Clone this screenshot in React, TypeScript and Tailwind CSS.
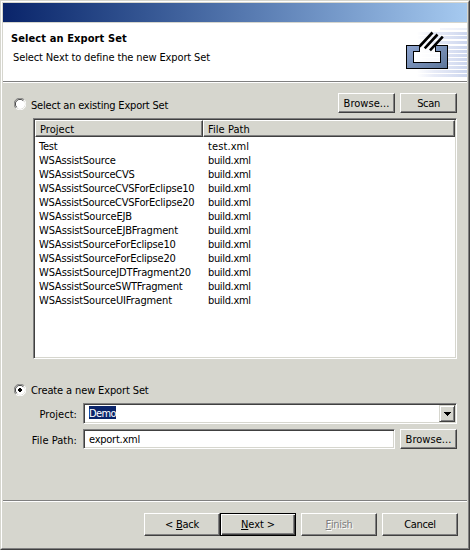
import type { ReactNode } from "react";

const rows: [string, string, string][] = [
  ["Test", "test.xml", "tracking-[-0.2px]"],
  ["WSAssistSource", "build.xml", "tracking-[-0.18px]"],
  ["WSAssistSourceCVS", "build.xml", "tracking-[-0.2px]"],
  ["WSAssistSourceCVSForEclipse10", "build.xml", "tracking-[-0.22px]"],
  ["WSAssistSourceCVSForEclipse20", "build.xml", "tracking-[-0.22px]"],
  ["WSAssistSourceEJB", "build.xml", "tracking-[-0.12px]"],
  ["WSAssistSourceEJBFragment", "build.xml", "tracking-[-0.13px]"],
  ["WSAssistSourceForEclipse10", "build.xml", "tracking-[-0.2px]"],
  ["WSAssistSourceForEclipse20", "build.xml", "tracking-[-0.2px]"],
  ["WSAssistSourceJDTFragment20", "build.xml", "tracking-[-0.13px]"],
  ["WSAssistSourceSWTFragment", "build.xml", "tracking-[-0.2px]"],
  ["WSAssistSourceUIFragment", "build.xml", "tracking-[-0.15px]"],
];

const raised =
  "border border-t-white border-l-white border-r-[#404040] border-b-[#404040] shadow-[inset_-1px_-1px_0_#808080]";
const sunken =
  "border border-t-[#808080] border-l-[#808080] border-r-white border-b-white shadow-[inset_1px_1px_0_#404040,inset_-1px_-1px_0_#d6d6ce]";

function Button({ className, children }: { className: string; children: ReactNode }) {
  return (
    <button className={`flex shrink-0 items-center justify-center bg-[#d6d6ce] whitespace-pre ${className}`}>
      {children}
    </button>
  );
}

function Radio({ checked }: { checked?: boolean }) {
  return (
    <svg width="12" height="12" viewBox="0 0 12 12" className="mt-[2px] shrink-0">
      <circle cx="6" cy="6" r="5" fill="#fff" />
      <path d="M1.8 10.2A5.5 5.5 0 0 1 10.2 1.8" fill="none" stroke="#808080" />
      <path d="M2.7 9.3A4.5 4.5 0 0 1 9.3 2.7" fill="none" stroke="#404040" />
      <path d="M10.2 1.8A5.5 5.5 0 0 1 1.8 10.2" fill="none" stroke="#fff" />
      {checked && <path d="M5 4h2v1h1v2h-1v1h-2v-1h-1v-2h1z" fill="#000" shapeRendering="crispEdges" />}
    </svg>
  );
}

function ExportBanner() {
  return (
    <svg width="56" height="58" viewBox="411 23 56 58" className="shrink-0 overflow-visible">
      <defs>
        <linearGradient id="fade" x1="417" x2="467" y1="0" y2="0" gradientUnits="userSpaceOnUse">
          <stop offset="0" stopColor="#d8def2" stopOpacity="0" />
          <stop offset=".35" stopColor="#d8def2" stopOpacity=".6" />
          <stop offset="1" stopColor="#ccd6ee" />
        </linearGradient>
        <linearGradient id="tray" x1="0" x2="1" y1="0" y2="1">
          <stop offset="0" stopColor="#8fa5d0" />
          <stop offset="1" stopColor="#5d7699" />
        </linearGradient>
      </defs>
      <rect x="440" y="28" width="27" height="2" fill="url(#fade)" fillOpacity=".4" />
      {[32, 36, 41, 46, 50, 54, 58, 62, 66, 70, 74].map((y) => (
        <rect key={y} x="417" y={y} width="50" height="3" fill="url(#fade)" />
      ))}
      <path d="M413.5 51.5h6v-6h16v6h5v11h-27z" fill="#fff" fillOpacity=".75" />
      <path
        d="M406.5 45.5h13v6h-6v11h27v-11h-5v-6h12v23h-41z"
        fill="url(#tray)"
        stroke="#000"
        shapeRendering="crispEdges"
      />
      <path d="M419.5 46.5L432.5 32.5M424.7 48.3L437.5 34.5M430 50.3L442.8 36.7" stroke="#000" strokeWidth="2.6" />
    </svg>
  );
}

export default function App() {
  return (
    <div className="h-[550px] w-[470px] border border-t-[#d6d6ce] border-l-[#d6d6ce] border-r-[#404040] border-b-[#404040] bg-[#d6d6ce] font-['DejaVu_Sans_Condensed','DejaVu_Sans',sans-serif] text-[11px] leading-[14px] tracking-[-0.35px] text-black [font-stretch:condensed]">
      <div className="flex h-full flex-col border border-t-white border-l-white border-r-[#808080] border-b-[#808080] pt-px pr-px pl-px">
        <div className="h-[19px] shrink-0 bg-linear-to-r from-[#0a246a] to-[#a6caf0]" />
        <header className="flex h-[59px] shrink-0 justify-between border-t border-t-[#d6d6ce] bg-white">
          <div className="pt-[9px] pl-[8px]">
            <h1 className="font-bold tracking-[0.1px] whitespace-nowrap">Select an Export Set</h1>
            <p className="mt-[5px] pl-[2px] tracking-[-0.12px] whitespace-nowrap">Select Next to define the new Export Set</p>
          </div>
          <ExportBanner />
        </header>
        <div className="h-[2px] shrink-0 border-t border-b border-t-[#808080] border-b-white" />

        <main className="flex grow flex-col pt-[10px] pr-[10px] pl-[11px]">
          <div className="flex h-[20px] shrink-0 items-center">
            <Radio />
            <span className="mt-[5px] ml-[5px] grow tracking-[-0.2px] whitespace-nowrap">Select an existing Export Set</span>
            <Button className={`h-[20px] w-[57px] pt-[2px] tracking-[0.05px] ${raised}`}>Browse...</Button>
            <Button className={`ml-[5px] h-[20px] w-[57px] pt-[2px] ${raised}`}>Scan</Button>
          </div>

          <div className={`mt-[5px] ml-[19px] h-[241px] w-[424px] shrink-0 bg-white p-px ${sunken}`}>
            <div className="flex h-[17px] bg-[#d6d6ce] tracking-[0.05px]">
              <div className={`w-[168px] pl-[4px] leading-[17px] ${raised}`}>Project</div>
              <div className={`w-[252px] pl-[4px] leading-[17px] ${raised}`}>File Path</div>
            </div>
            <div className="pt-[3px]">
              {rows.map(([project, path, tracking]) => (
                <div key={project} className="flex h-[14px] pl-[4px]">
                  <span className={`w-[169px] whitespace-nowrap ${tracking}`}>{project}</span>
                  <span className={path === "test.xml" ? "tracking-[0.1px]" : ""}>{path}</span>
                </div>
              ))}
            </div>
          </div>

          <div className="mt-[23px] flex h-[14px] shrink-0 items-center">
            <Radio checked />
            <span className="mt-[4px] ml-[5px] tracking-[-0.13px] whitespace-nowrap">Create a new Export Set</span>
          </div>

          <div className="mt-[7px] flex h-[21px] shrink-0">
            <label className="w-[63px] shrink-0 pt-[5px] text-right tracking-[0.05px] whitespace-nowrap">Project:</label>
            <div className={`ml-[6px] flex w-[374px] justify-between bg-white p-px ${sunken}`}>
              <span className="mt-px ml-[4px] h-[13px] w-[27px] bg-[#0a246a] leading-[15px] tracking-[-0.6px] text-white">Demo</span>
              <Button className="h-[17px] w-[16px] border border-t-[#d6d6ce] border-l-[#d6d6ce] border-r-[#404040] border-b-[#404040] shadow-[inset_1px_1px_0_#fff,inset_-1px_-1px_0_#808080]">
                <svg width="7" height="4" viewBox="0 0 7 4" shapeRendering="crispEdges">
                  <path d="M0 0h7v1h-1v1h-1v1h-1v1h-1v-1h-1v-1h-1v-1h-1z" />
                </svg>
              </Button>
            </div>
          </div>
          <div className="mt-[5px] flex h-[20px] shrink-0">
            <label className="w-[63px] shrink-0 pt-[5px] text-right tracking-[0.05px] whitespace-nowrap">File Path:</label>
            <div className={`ml-[6px] w-[312px] bg-white pt-[3px] pl-[5px] tracking-[-0.25px] ${sunken}`}>export.xml</div>
            <Button className={`ml-[5px] h-[20px] w-[57px] pt-[2px] tracking-[0.05px] ${raised}`}>Browse...</Button>
          </div>
        </main>

        <div className="h-[2px] shrink-0 border-t border-b border-t-[#808080] border-b-white" />
        <footer className="flex h-[46px] shrink-0 pt-[11px] pl-[141px]">
          <Button className={`h-[23px] w-[76px] tracking-[-0.25px] ${raised}`}>
            {"< "}<span className="underline">B</span>ack
          </Button>
          <Button className="h-[23px] w-[76px] border border-black tracking-[-0.1px] shadow-[inset_1px_1px_0_#fff,inset_-1px_-1px_0_#404040,inset_-2px_-2px_0_#808080]">
            <span className="underline">N</span>{"ext >"}
          </Button>
          <Button className={`ml-[5px] h-[23px] w-[76px] text-[#808080] [text-shadow:1px_1px_0_#fff] ${raised}`}>
            <span className="underline">F</span>inish
          </Button>
          <Button className={`ml-[5px] h-[23px] w-[76px] ${raised}`}>Cancel</Button>
        </footer>
      </div>
    </div>
  );
}
